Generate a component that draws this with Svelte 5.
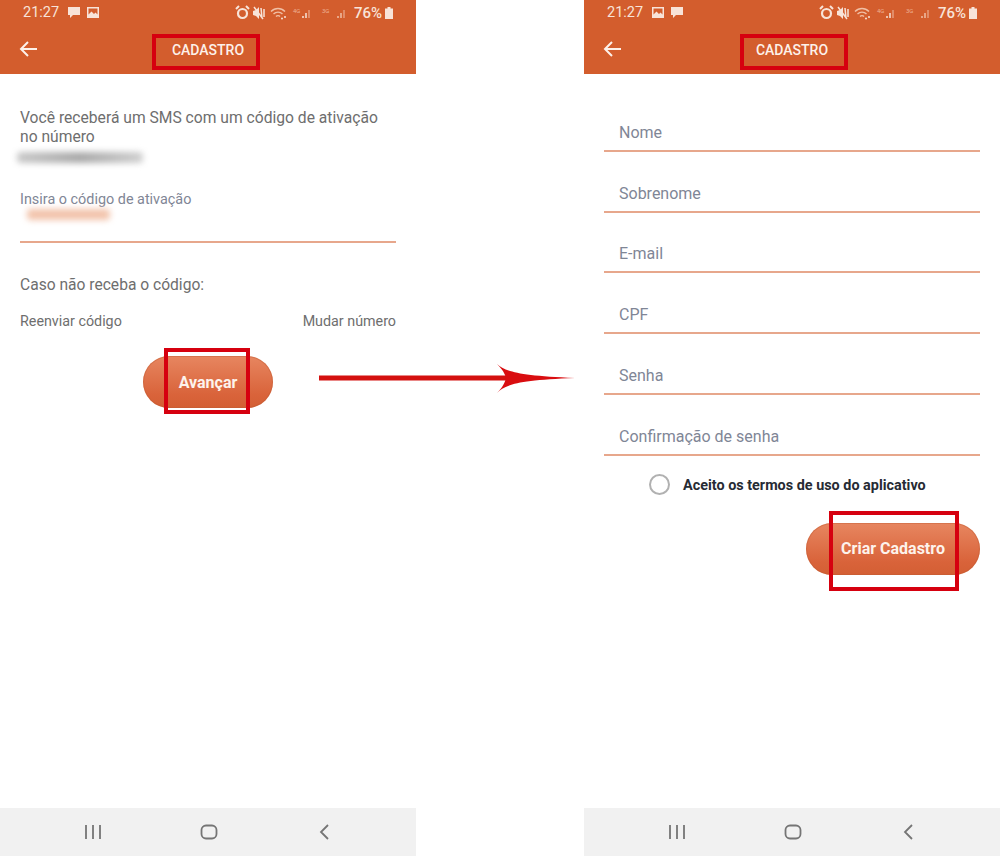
<script lang="ts">
    const fields = ['Nome', 'Sobrenome', 'E-mail', 'CPF', 'Senha', 'Confirmação de senha']
</script>

{#snippet statusBar(first: boolean)}
    <div class="status">
        <span class="time">21:27</span>
        {#if first}
            <svg class="note" viewBox="0 0 14 13" width="14" height="13"><path d="M1 1h12v8H6l-3 3V9H1z" /></svg>
            <svg class="note" viewBox="0 0 14 13" width="14" height="13"><path fill-rule="evenodd" d="M1 1h12v11H1zM2.500 2.500v6l3-3 2.500 2.500 1.500-1.500 2 2v-6z" /></svg>
        {:else}
            <svg class="note" viewBox="0 0 14 13" width="14" height="13"><path fill-rule="evenodd" d="M1 1h12v11H1zM2.500 2.500v6l3-3 2.500 2.500 1.500-1.500 2 2v-6z" /></svg>
            <svg class="note" viewBox="0 0 14 13" width="14" height="13"><path d="M1 1h12v8H6l-3 3V9H1z" /></svg>
        {/if}
        <div class="status-right">
            <svg class="alarm" viewBox="0 0 15 15" width="15" height="15">
                <circle cx="7.500" cy="8.500" r="4.500" fill="none" stroke="#f8e3d8" stroke-width="2.200" />
                <path d="M1 4l3-3M14 4l-3-3" stroke="#f8e3d8" stroke-width="2" />
            </svg>
            <svg class="mute" viewBox="0 0 13 14" width="13" height="14">
                <path d="M0 5l3-1 3-3v12L3 10 0 9z" fill="#f8e3d8" />
                <path d="M8 2l1 10M11 3v8M1 1l9 12" stroke="#f8e3d8" stroke-width="1.500" />
            </svg>
            <svg class="wifi" viewBox="0 0 18 14" width="18" height="14" fill="none" stroke="#f0bfa5" stroke-width="1.400">
                <path d="M1 5.500c4-4 10-4 14 0M3.500 8c2.500-2.500 6.500-2.500 9 0M6 10.500c1-1 3-1 4 0" />
                <circle cx="15" cy="11" r="1" fill="#f8e3d8" stroke="none" />
                <circle cx="12" cy="12.500" r="1" fill="#f8e3d8" stroke="none" />
            </svg>
            <span class="signal first-sim"><small>4G</small><svg viewBox="0 0 10 12" width="10" height="12"><path d="M1 11V9M4 11V6" stroke="#f8e3d8" stroke-width="1.500" /><path d="M7 11V3" stroke="#e69c7c" stroke-width="1.500" /></svg></span>
            <span class="signal second-sim"><small>3G</small><svg viewBox="0 0 10 12" width="10" height="12"><path d="M1 11V9M4 11V6" stroke="#f0bfa5" stroke-width="1.500" /><path d="M7 11V3" stroke="#e69c7c" stroke-width="1.500" /></svg></span>
            <span class="pct">76%</span>
            <svg class="battery" viewBox="0 0 8 12" width="8" height="12"><path d="M2.500 0h3v1.500H8V12H0V1.500h2.500z" fill="#f8e3d8" /></svg>
        </div>
    </div>
{/snippet}

{#snippet appBar()}
    <div class="appbar">
        <svg class="back" viewBox="0 0 18 16" width="18" height="16" fill="none" stroke="#fdf1ea" stroke-width="2">
            <path d="M18 8H2M9 1L2 8l7 7" />
        </svg>
        <span class="title">CADASTRO</span>
    </div>
{/snippet}

{#snippet navBar()}
    <div class="nav">
        <svg viewBox="0 0 18 14" width="18" height="14"><path d="M2 0v14M9 0v14M16 0v14" stroke="#757575" stroke-width="1.800" /></svg>
        <svg viewBox="0 0 18 16" width="18" height="16"><rect x="1.500" y="1.500" width="15" height="13" rx="4.500" fill="none" stroke="#757575" stroke-width="1.800" /></svg>
        <svg class="nav-back" viewBox="0 0 12 16" width="12" height="16"><path d="M10 1L3 8l7 7" fill="none" stroke="#757575" stroke-width="1.800" /></svg>
    </div>
{/snippet}

<div class="canvas">
    <section class="phone">
        <header class="top">
            {@render statusBar(true)}
            {@render appBar()}
        </header>
        <main class="code-page">
            <p class="intro">Você receberá um SMS com um código de ativação<br />no número</p>
            <div class="smudge phone-no"></div>
            <div class="code-field">
                <span class="code-label">Insira o código de ativação</span>
                <div class="smudge code-value"></div>
            </div>
            <p class="missing">Caso não receba o código:</p>
            <div class="links">
                <span>Reenviar código</span>
                <span>Mudar número</span>
            </div>
            <div class="action center"><span class="btn next">Avançar</span></div>
        </main>
        {@render navBar()}
        <div class="mark mark-title"></div>
        <div class="mark mark-next"></div>
    </section>

    <section class="phone">
        <header class="top">
            {@render statusBar(false)}
            {@render appBar()}
        </header>
        <main class="form-page">
            {#each fields as field}
                <div class="field">{field}</div>
            {/each}
            <div class="terms">
                <span class="radio"></span>
                <span class="terms-text">Aceito os termos de uso do aplicativo</span>
            </div>
            <div class="action end"><span class="btn create">Criar Cadastro</span></div>
        </main>
        {@render navBar()}
        <div class="mark mark-title-form"></div>
        <div class="mark mark-create"></div>
    </section>

    <svg class="arrow" viewBox="0 0 260 32" width="260" height="32">
        <path d="M3 13.500h190v5H3z" fill="#d4100f" />
        <path d="M181 2c8 7 20 12 78 14-58 2-70 7-78 15 6-6 8-11 9-15-1-4-3-8-9-14z" fill="#d90d10" />
    </svg>
</div>

<style>
    :global(body) {
        margin: 0;
        background: #fff;
    }

    .canvas {
        position: relative;
        display: flex;
        justify-content: space-between;
        width: 1000px;
        height: 856px;
        overflow: hidden;
        font-family: Roboto, "Liberation Sans", sans-serif;
    }

    .phone {
        position: relative;
        display: flex;
        flex-direction: column;
        width: 416px;
        height: 856px;
    }

    .top {
        height: 74px;
        flex: none;
        background: #d35d2d;
        color: #fdf1ea;
    }

    .status {
        display: flex;
        align-items: center;
        gap: 5px;
        height: 25px;
        padding: 0 23px 0 23px;
        font-size: 14.500px;
        color: #f8e3d8;
    }

    .time {
        margin-right: 3px;
    }

    .note {
        fill: #f8e3d8;
    }

    .status-right {
        display: flex;
        align-items: center;
        margin-left: auto;
    }

    .mute {
        margin-left: 3px;
    }

    .wifi {
        margin-left: 4px;
    }

    .signal {
        display: flex;
        align-items: flex-end;
        justify-content: space-between;
    }

    .first-sim {
        width: 19px;
        margin-left: 5px;
    }

    .second-sim {
        width: 25px;
        margin-left: 10px;
    }

    .signal small {
        font-size: 6px;
        color: #eeb196;
        align-self: flex-start;
    }

    .pct {
        width: 27px;
        margin-left: 7px;
        font-size: 15px;
        font-weight: 500;
        white-space: nowrap;
    }

    .battery {
        margin-left: 4px;
    }

    .appbar {
        position: relative;
        display: flex;
        align-items: center;
        justify-content: center;
        height: 49px;
    }

    .back {
        position: absolute;
        left: 19px;
        top: 16px;
    }

    .title {
        font-size: 14px;
        font-weight: 500;
    }

    .code-page {
        flex: 1;
        padding: 34px 20px 0;
        color: #6e6e6e;
    }

    .intro {
        margin: 0;
        font-size: 15.650px;
        line-height: 19px;
    }

    .smudge {
        filter: blur(3px);
        border-radius: 4px;
    }

    .phone-no {
        width: 126px;
        height: 11px;
        margin: 6px 0 0 -3px;
        background: linear-gradient(90deg, #c8c8c8, #a8a8a8 50%, #cfcfcf);
    }

    .code-field {
        height: 50px;
        margin-top: 28px;
        border-bottom: 2px solid #e7a78c;
    }

    .code-label {
        display: block;
        font-size: 14.400px;
        line-height: 18px;
        color: #7f8696;
    }

    .code-value {
        width: 83px;
        height: 11px;
        margin-left: 7px;
        background: #f2c3ab;
    }

    .missing {
        margin: 32px 0 0;
        font-size: 15.600px;
        line-height: 20px;
    }

    .links {
        display: flex;
        justify-content: space-between;
        margin-top: 18px;
        font-size: 14.300px;
        line-height: 16px;
    }

    .action {
        display: flex;
    }

    .center {
        justify-content: center;
    }

    .end {
        justify-content: flex-end;
    }

    .btn {
        display: flex;
        align-items: center;
        justify-content: center;
        height: 52px;
        border-radius: 26px;
        background: linear-gradient(#e78660, #d9633a 75%, #d35f34);
        color: #fdf3ec;
        font-size: 16px;
        font-weight: 700;
        box-shadow: inset 0 0 0 1px rgba(190, 90, 50, 0.4);
    }

    .next {
        width: 130px;
        margin-top: 27px;
    }

    .form-page {
        flex: 1;
        padding: 17px 20px 0;
    }

    .field {
        display: flex;
        align-items: center;
        box-sizing: border-box;
        height: 60.800px;
        padding: 24px 15px 0;
        border-bottom: 2px solid #e7a78c;
        font-size: 16px;
        color: #7f8696;
    }

    .terms {
        display: flex;
        align-items: center;
        gap: 13px;
        margin: 17px 0 0 45px;
        font-size: 14.400px;
        font-weight: 700;
        line-height: 22px;
        color: #262b33;
    }

    .terms-text {
        padding-top: 2px;
    }

    .radio {
        box-sizing: border-box;
        width: 21px;
        height: 21px;
        border: 2px solid #b1b1b1;
        border-radius: 50%;
    }

    .create {
        width: 174px;
        margin-top: 26px;
    }

    .nav {
        display: flex;
        align-items: center;
        justify-content: center;
        gap: 98px;
        height: 48px;
        flex: none;
        padding-right: 2px;
        background: #f1f1f1;
    }

    .nav-back {
        margin-left: 2px;
    }

    .mark,
    .mark-title-form {
        position: absolute;
        box-sizing: border-box;
        border: 4px solid #d6000f;
    }

    .mark-title {
        left: 152px;
        top: 34px;
        width: 108px;
        height: 36px;
    }

    .mark-title-form {
        left: 156px;
        top: 34px;
        width: 108px;
        height: 36px;
    }

    .mark-next {
        left: 164px;
        top: 348px;
        width: 86px;
        height: 66px;
    }

    .mark-create {
        left: 245px;
        top: 511px;
        width: 130px;
        height: 80px;
    }

    .arrow {
        position: absolute;
        left: 316px;
        top: 362px;
    }
</style>
